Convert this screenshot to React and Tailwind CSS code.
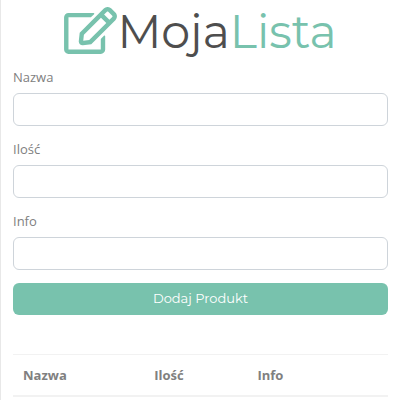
import { FaRegEdit } from "react-icons/fa";

const fields = [
  { id: "nazwa", label: "Nazwa" },
  { id: "ilosc", label: "Ilość" },
  { id: "info", label: "Info" },
];

function Logo() {
  return (
    <h1 className="flex h-[62px] justify-center font-['Montserrat','Lato',sans-serif] text-[46px] leading-[56px] font-normal text-[#4e4e4e]">
      <FaRegEdit className="mt-[3px] h-[47px] w-[53px] text-[#78c2ad]" aria-hidden="true" />
      <span>
        Moja<span className="text-[#78c2ad]">Lista</span>
      </span>
    </h1>
  );
}

function Field({ id, label }) {
  return (
    <div className="mb-3">
      <label htmlFor={id} className="mb-[5px] block leading-[22px]">
        {label}
      </label>
      <input
        id={id}
        type="text"
        className="block h-[33px] w-full rounded-md border border-[#ced4da] bg-white px-3 outline-none"
      />
    </div>
  );
}

export default function App() {
  return (
    <main className="min-h-screen border-l border-[#e8e8e8] bg-white px-3 pt-1 font-['Open_Sans','Noto_Sans',sans-serif] text-[13px] text-[#808080]">
      <Logo />
      <form onSubmit={(e) => e.preventDefault()}>
        {fields.map((field) => (
          <Field key={field.id} {...field} />
        ))}
        <button
          type="submit"
          className="mt-[13px] block h-8 w-full rounded-md bg-[#78c2ad] font-['Montserrat','Lato',sans-serif] text-[13px] text-white"
        >
          Dodaj Produkt
        </button>
      </form>
      <table className="mt-[39px] w-full table-fixed border-collapse text-left">
        <thead>
          <tr className="border-t border-b-2 border-t-[#f2f2f2] border-b-[#f2f2f2]">
            <th className="h-[41px] w-[35%] px-[10px] pt-[2px] font-bold">Nazwa</th>
            <th className="w-[27.5%] px-[10px] pt-[2px] font-bold">Ilość</th>
            <th className="px-[10px] pt-[2px] font-bold">Info</th>
          </tr>
        </thead>
      </table>
    </main>
  );
}
